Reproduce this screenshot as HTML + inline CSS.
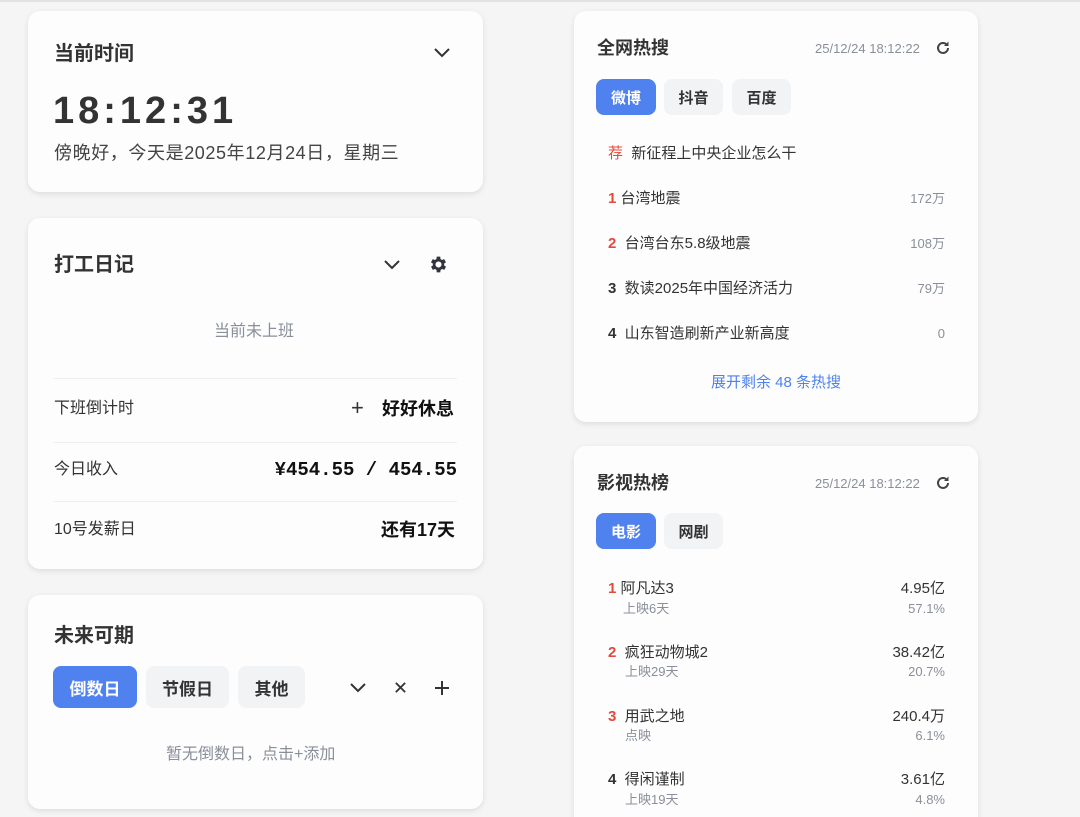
<!DOCTYPE html>
<html><head><meta charset="utf-8">
<style>
*{margin:0;padding:0;box-sizing:border-box}
html,body{width:1080px;height:817px;overflow:hidden}
body{background:#f5f5f5;position:relative;font-family:"Liberation Sans","Noto Sans CJK SC",sans-serif;color:#333}
.top{position:absolute;left:0;top:0;width:1080px;height:2px;background:#e2e2e2}
.card{position:absolute;background:#fdfdfd;border-radius:12px;box-shadow:0 2px 6px rgba(0,0,0,.10)}
.a{position:absolute;white-space:nowrap;line-height:1}
.t{font-size:20px;font-weight:bold;color:#333}
.ic{position:absolute}
.line{position:absolute;height:1px;background:#efefef}
.btn{position:absolute;border-radius:8px;background:#f2f3f5;color:#333;font-weight:bold;display:flex;align-items:center;justify-content:center}
.btn.on{background:#4f82ee;color:#fff}
.gray{color:#8a8f99}
.red{color:#e24a3b}
</style></head><body>
<div class="top"></div>

<!-- card 1 -->
<div class="card" style="left:28px;top:11px;width:455px;height:181px"></div>
<div class="a t" style="left:54px;top:44px">当前时间</div>
<svg class="ic" style="left:433px;top:46px" width="18" height="14" viewBox="0 0 18 14"><path d="M2 3l7 7 7-7" fill="none" stroke="#333" stroke-width="2"/></svg>
<div class="a" style="left:53px;top:92px;font-size:38px;font-weight:bold;letter-spacing:4px;color:#333">18:12:31</div>
<div class="a" style="left:54px;top:144px;font-size:18px;letter-spacing:0.6px;color:#444">傍晚好，今天是2025年12月24日，星期三</div>

<!-- card 2 -->
<div class="card" style="left:28px;top:218px;width:455px;height:351px"></div>
<div class="a t" style="left:54px;top:255px">打工日记</div>
<svg class="ic" style="left:383px;top:258px" width="18" height="14" viewBox="0 0 18 14"><path d="M2 3l7 7 7-7" fill="none" stroke="#333" stroke-width="2"/></svg>
<svg class="ic" style="left:428px;top:254px" width="21" height="21" viewBox="0 0 24 24"><path fill="#2f3441" d="M19.4 13a7.5 7.5 0 000-2l2.1-1.6-2-3.5-2.5 1a7.5 7.5 0 00-1.7-1L15 3h-4l-.4 2.9a7.5 7.5 0 00-1.7 1l-2.5-1-2 3.5L6.6 11a7.5 7.5 0 000 2l-2.1 1.6 2 3.5 2.5-1a7.5 7.5 0 001.7 1L11 21h4l.4-2.9a7.5 7.5 0 001.7-1l2.5 1 2-3.5zM13 15.5a3.5 3.5 0 110-7 3.5 3.5 0 010 7z" transform="translate(-1 0)"/></svg>
<div class="a gray" style="left:214px;top:324px;font-size:16px">当前未上班</div>
<div class="line" style="left:53px;top:378px;width:404px"></div>
<div class="a" style="left:54px;top:401px;font-size:16px">下班倒计时</div>
<div class="a" style="left:351px;top:397px;font-size:22px;color:#333">+</div>
<div class="a" style="left:382px;top:400px;font-size:18px;font-weight:bold;color:#111">好好休息</div>
<div class="line" style="left:53px;top:442px;width:404px"></div>
<div class="a" style="left:54px;top:462px;font-size:16px">今日收入</div>
<div class="a" style="right:623px;top:461px;font-size:19px;font-weight:bold;font-family:'Liberation Mono',monospace;color:#111">¥454.55 / 454.55</div>
<div class="line" style="left:53px;top:501px;width:404px"></div>
<div class="a" style="left:54px;top:522px;font-size:16px">10号发薪日</div>
<div class="a" style="right:625px;top:521px;font-size:18px;font-weight:bold;color:#111">还有17天</div>

<!-- card 3 -->
<div class="card" style="left:28px;top:595px;width:455px;height:214px"></div>
<div class="a t" style="left:54px;top:626px">未来可期</div>
<div class="btn on" style="left:53px;top:666px;width:84px;height:42px;font-size:17px">倒数日</div>
<div class="btn" style="left:146px;top:666px;width:83px;height:42px;font-size:17px">节假日</div>
<div class="btn" style="left:238px;top:666px;width:67px;height:42px;font-size:17px">其他</div>
<svg class="ic" style="left:349px;top:681px" width="18" height="14" viewBox="0 0 18 14"><path d="M2 3l7 7 7-7" fill="none" stroke="#333" stroke-width="2"/></svg>
<svg class="ic" style="left:394px;top:681px" width="13" height="13" viewBox="0 0 14 14"><path d="M2 2l10 10M12 2L2 12" stroke="#333" stroke-width="2"/></svg>
<svg class="ic" style="left:434px;top:680px" width="16" height="16" viewBox="0 0 16 16"><path d="M8 1v14M1 8h14" stroke="#333" stroke-width="2"/></svg>
<div class="a gray" style="left:166px;top:747px;font-size:16px">暂无倒数日，点击+添加</div>

<!-- right card 1 -->
<div class="card" style="left:574px;top:11px;width:404px;height:411px"></div>
<div class="a" style="left:597px;top:39px;font-size:18px;font-weight:bold">全网热搜</div>
<div class="a gray" style="left:815px;top:42px;font-size:13px">25/12/24 18:12:22</div>
<svg class="ic" style="left:935px;top:40px" width="16" height="16" viewBox="0 0 16 16"><path d="M13 8a5 5 0 11-1.5-3.6" fill="none" stroke="#444" stroke-width="2"/><path d="M13.5 1.5v4.5H9z" fill="#444"/></svg>
<div class="btn on" style="left:596px;top:79px;width:60px;height:36px;font-size:15px">微博</div>
<div class="btn" style="left:664px;top:79px;width:59px;height:36px;font-size:15px">抖音</div>
<div class="btn" style="left:732px;top:79px;width:59px;height:36px;font-size:15px">百度</div>
<div class="a" style="left:608px;top:146px;font-size:15px"><span class="red">荐</span>&nbsp; 新征程上中央企业怎么干</div>
<div class="a" style="left:608px;top:191px;font-size:15px"><b class="red">1</b>&nbsp;台湾地震</div>
<div class="a gray" style="right:135px;top:192px;font-size:13px">172万</div>
<div class="a" style="left:608px;top:236px;font-size:15px"><b class="red">2</b>&nbsp; 台湾台东5.8级地震</div>
<div class="a gray" style="right:135px;top:237px;font-size:13px">108万</div>
<div class="a" style="left:608px;top:281px;font-size:15px"><b>3</b>&nbsp; 数读2025年中国经济活力</div>
<div class="a gray" style="right:135px;top:282px;font-size:13px">79万</div>
<div class="a" style="left:608px;top:326px;font-size:15px"><b>4</b>&nbsp; 山东智造刷新产业新高度</div>
<div class="a gray" style="right:135px;top:327px;font-size:13px">0</div>
<div class="a" style="left:711px;top:375px;font-size:15px;color:#4f82ee">展开剩余 48 条热搜</div>

<!-- right card 2 -->
<div class="card" style="left:574px;top:446px;width:404px;height:400px"></div>
<div class="a" style="left:597px;top:474px;font-size:18px;font-weight:bold">影视热榜</div>
<div class="a gray" style="left:815px;top:477px;font-size:13px">25/12/24 18:12:22</div>
<svg class="ic" style="left:935px;top:475px" width="16" height="16" viewBox="0 0 16 16"><path d="M13 8a5 5 0 11-1.5-3.6" fill="none" stroke="#444" stroke-width="2"/><path d="M13.5 1.5v4.5H9z" fill="#444"/></svg>
<div class="btn on" style="left:596px;top:513px;width:60px;height:36px;font-size:15px">电影</div>
<div class="btn" style="left:664px;top:513px;width:59px;height:36px;font-size:15px">网剧</div>

<div class="a" style="left:608px;top:581px;font-size:15px"><b class="red">1</b>&nbsp;阿凡达3</div>
<div class="a gray" style="left:623px;top:602px;font-size:13px">上映6天</div>
<div class="a" style="right:135px;top:581px;font-size:15px">4.95亿</div>
<div class="a gray" style="right:135px;top:602px;font-size:13px">57.1%</div>

<div class="a" style="left:608px;top:645px;font-size:15px"><b class="red">2</b>&nbsp; 疯狂动物城2</div>
<div class="a gray" style="left:625px;top:665px;font-size:13px">上映29天</div>
<div class="a" style="right:135px;top:645px;font-size:15px">38.42亿</div>
<div class="a gray" style="right:135px;top:665px;font-size:13px">20.7%</div>

<div class="a" style="left:608px;top:709px;font-size:15px"><b class="red">3</b>&nbsp; 用武之地</div>
<div class="a gray" style="left:625px;top:729px;font-size:13px">点映</div>
<div class="a" style="right:135px;top:709px;font-size:15px">240.4万</div>
<div class="a gray" style="right:135px;top:729px;font-size:13px">6.1%</div>

<div class="a" style="left:608px;top:772px;font-size:15px"><b>4</b>&nbsp; 得闲谨制</div>
<div class="a gray" style="left:625px;top:793px;font-size:13px">上映19天</div>
<div class="a" style="right:135px;top:772px;font-size:15px">3.61亿</div>
<div class="a gray" style="right:135px;top:793px;font-size:13px">4.8%</div>
</body></html>
